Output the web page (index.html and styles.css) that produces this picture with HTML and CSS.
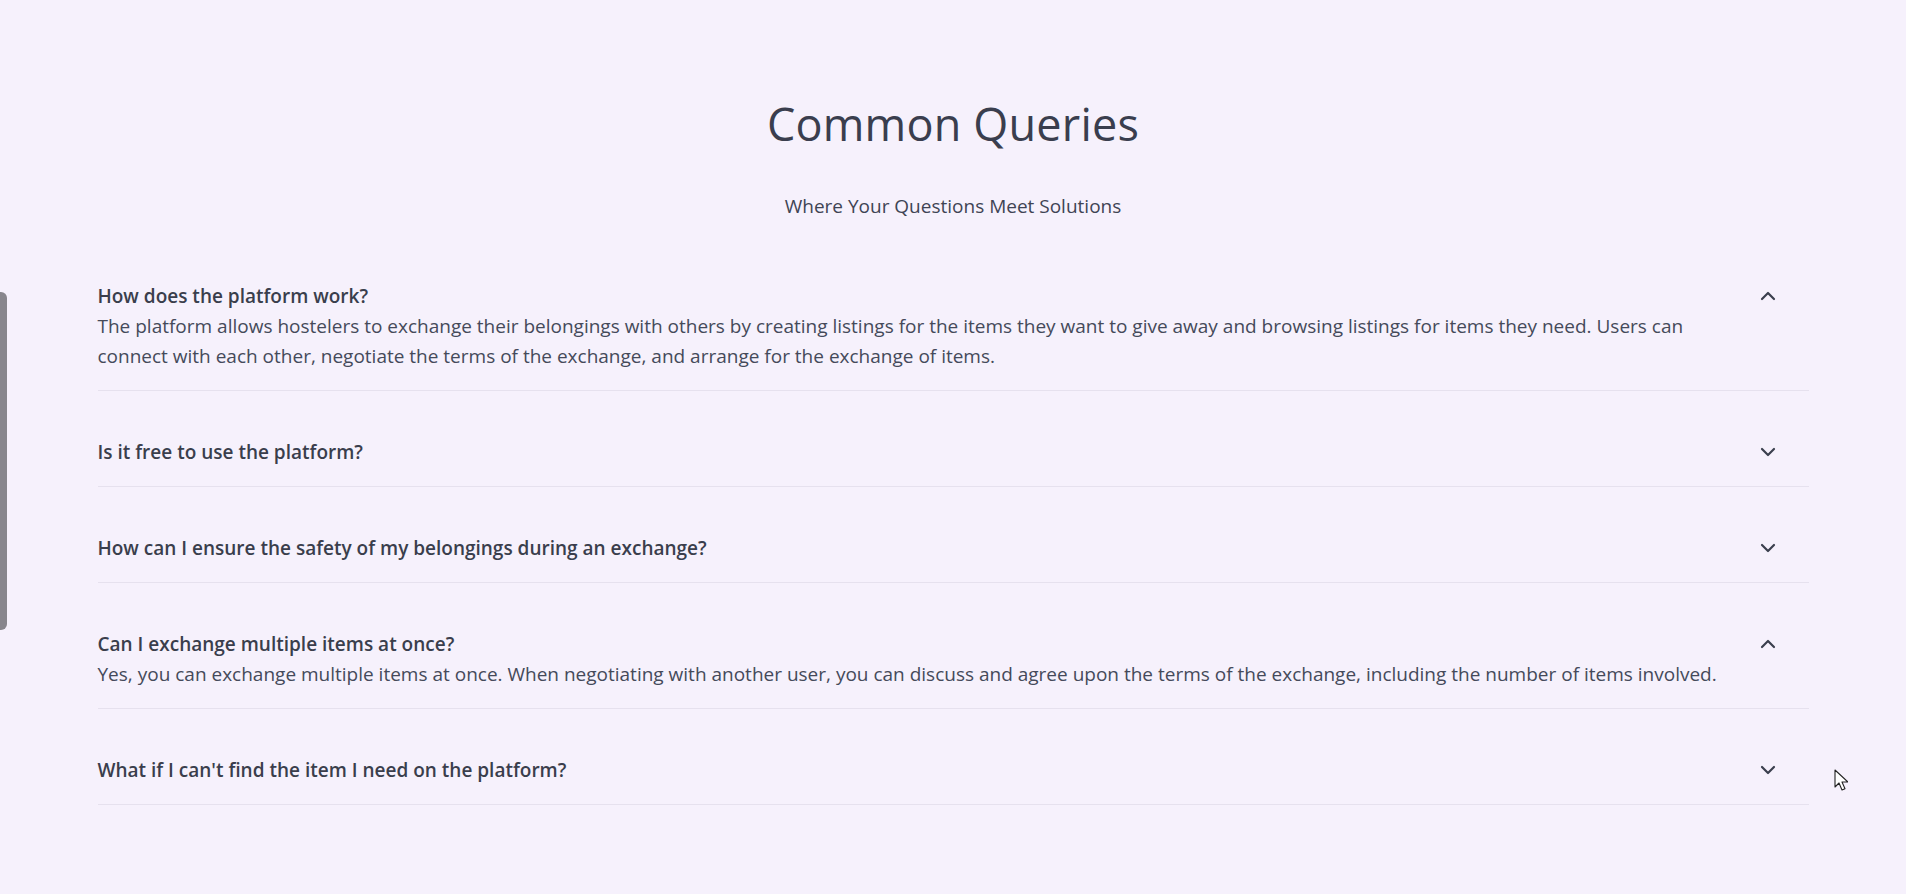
FILE: index.html
```html
<!DOCTYPE html>
<html lang="en">
<head>
<meta charset="utf-8">
<title>Common Queries</title>
<link rel="stylesheet" href="styles.css">
</head>
<body>
<div class="side-handle"></div>
<section class="faq">
  <h1 class="faq-title">Common Queries</h1>
  <p class="faq-subtitle">Where Your Questions Meet Solutions</p>
  <div class="faq-list">
    <div class="faq-item open">
      <div class="faq-question">
        <span class="q-text">How does the platform work?</span>
        <svg class="chev" viewBox="0 0 24 24" width="24" height="24"><path d="M6 15l6-6 6 6"/></svg>
      </div>
      <p class="faq-answer">The platform allows hostelers to exchange their belongings with others by creating listings for the items they want to give away and browsing listings for items they need. Users can connect with each other, negotiate the terms of the exchange, and arrange for the exchange of items.</p>
    </div>
    <div class="faq-item">
      <div class="faq-question">
        <span class="q-text">Is it free to use the platform?</span>
        <svg class="chev" viewBox="0 0 24 24" width="24" height="24"><path d="M6 9l6 6 6-6"/></svg>
      </div>
    </div>
    <div class="faq-item">
      <div class="faq-question">
        <span class="q-text">How can I ensure the safety of my belongings during an exchange?</span>
        <svg class="chev" viewBox="0 0 24 24" width="24" height="24"><path d="M6 9l6 6 6-6"/></svg>
      </div>
    </div>
    <div class="faq-item open">
      <div class="faq-question">
        <span class="q-text">Can I exchange multiple items at once?</span>
        <svg class="chev" viewBox="0 0 24 24" width="24" height="24"><path d="M6 15l6-6 6 6"/></svg>
      </div>
      <p class="faq-answer">Yes, you can exchange multiple items at once. When negotiating with another user, you can discuss and agree upon the terms of the exchange, including the number of items involved.</p>
    </div>
    <div class="faq-item">
      <div class="faq-question">
        <span class="q-text">What if I can't find the item I need on the platform?</span>
        <svg class="chev" viewBox="0 0 24 24" width="24" height="24"><path d="M6 9l6 6 6-6"/></svg>
      </div>
    </div>
  </div>
</section>
<svg class="cursor" viewBox="0 0 14 22" width="14" height="22"><path d="M1 1v17l4-4 3 7 3-1.3-3-6.7h6z" fill="#fff" stroke="#222" stroke-width="1.1" stroke-linejoin="round"/></svg>
</body>
</html>
```

FILE: styles.css
```css
html, body {
  margin: 0;
  padding: 0;
}
body {
  background: #f6f1fc;
  font-family: "Open Sans", "Noto Sans", sans-serif;
  color: #374151;
  min-height: 894px;
}
.faq {
  width: 1711px;
  margin: 0 auto;
  padding-top: 94px;
}
.faq-title {
  margin: 0;
  text-align: center;
  font-size: 45px;
  font-weight: 400;
  line-height: 60px;
  color: #3a3e4e;
  letter-spacing: 0.2px;
}
.faq-subtitle {
  margin: 37px 0 0;
  text-align: center;
  font-size: 19px;
  line-height: 30px;
  color: #3f4454;
}
.faq-list {
  margin-top: 14px;
  display: flex;
  flex-direction: column;
}
.faq-item {
  padding: 46px 0 19px;
  border-bottom: 1px solid #e6e1ee;
}
.faq-question {
  display: flex;
  align-items: center;
  justify-content: space-between;
  padding-right: 29px;
  height: 30px;
}
.q-text {
  font-size: 19px;
  font-weight: 600;
  line-height: 30px;
  color: #3a3e4c;
}
.chev {
  fill: none;
  stroke: #3b3f4e;
  stroke-width: 2.2;
  stroke-linecap: round;
  stroke-linejoin: round;
}
.faq-answer {
  margin: 0;
  padding-right: 80px;
  font-size: 19px;
  line-height: 30px;
  color: #454a5a;
}
.side-handle {
  position: fixed;
  left: 0;
  top: 292px;
  width: 7px;
  height: 338px;
  background: #88868d;
  border-radius: 0 6px 6px 0;
}
.cursor {
  position: absolute;
  left: 1834px;
  top: 769px;
}
```
